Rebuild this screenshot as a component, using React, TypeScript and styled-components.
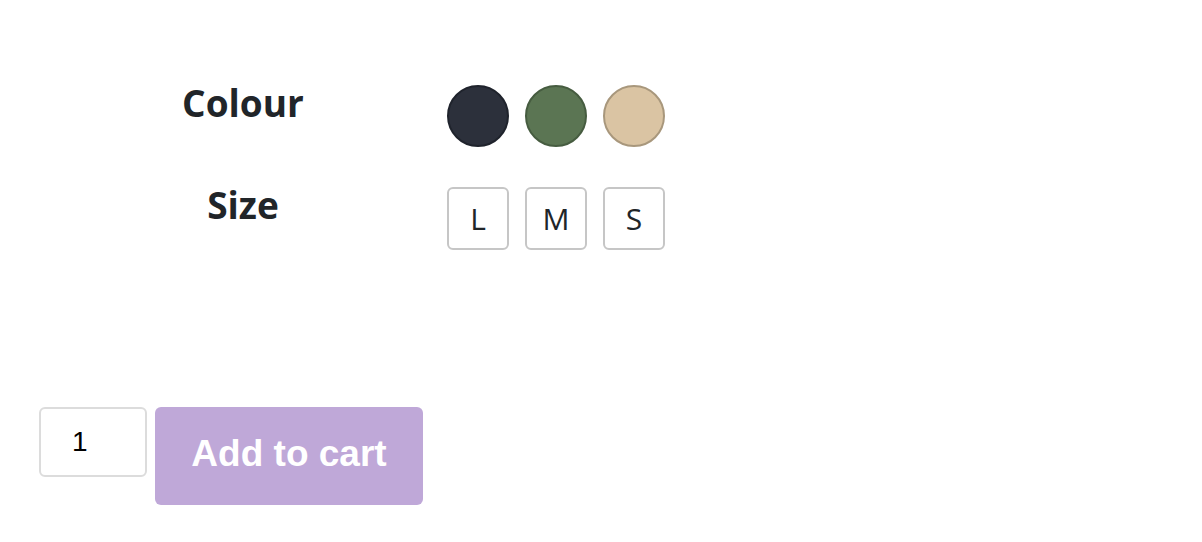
import React, { useState } from 'react';
import styled, { createGlobalStyle } from 'styled-components';

const GlobalStyle = createGlobalStyle`
    html, body {
        margin: 0;
        padding: 0;
        background: #ffffff;
    }
`;

const COLOURS = [
    { name: 'Navy', fill: '#2c303b', ring: '#1f232c' },
    { name: 'Olive', fill: '#5b7553', ring: '#465c40' },
    { name: 'Sand', fill: '#dac4a3', ring: '#a8977c' },
];

const SIZES = ['L', 'M', 'S'];

const App = () => {
    const [qty, setQty] = useState('1');

    return (
        <>
            <GlobalStyle />
            <Page>
                <Options>
                    <OptionLabel>Colour</OptionLabel>
                    <Choices>
                        {COLOURS.map((c) => (
                            <Swatch key={c.name} title={c.name} $fill={c.fill} $ring={c.ring} />
                        ))}
                    </Choices>
                    <OptionLabel>Size</OptionLabel>
                    <Choices>
                        {SIZES.map((s) => (
                            <SizeBox key={s}>{s}</SizeBox>
                        ))}
                    </Choices>
                </Options>
                <CartRow>
                    <QtyInput value={qty} onChange={(e) => setQty(e.target.value)} />
                    <AddButton disabled>Add to cart</AddButton>
                </CartRow>
            </Page>
        </>
    );
};

const Page = styled.div`
    padding: 85px 0 0 39px;
    font-family: "Open Sans", "Liberation Sans", sans-serif;
    color: #212529;
`;

const Options = styled.div`
    display: grid;
    grid-template-columns: 408px auto;
    row-gap: 40px;
    align-items: start;
`;

const OptionLabel = styled.div`
    font-size: 37px;
    font-weight: 700;
    line-height: 36px;
    text-align: center;
`;

const Choices = styled.div`
    display: flex;
    gap: 16px;
`;

const Swatch = styled.button<{ $fill: string; $ring: string }>`
    width: 62px;
    height: 62px;
    padding: 0;
    border-radius: 50%;
    border: 2px solid ${(p) => p.$ring};
    background: ${(p) => p.$fill};
    cursor: pointer;
`;

const SizeBox = styled.button`
    width: 62px;
    height: 63px;
    padding: 0;
    border: 2px solid #c6c6c6;
    border-radius: 6px;
    background: #ffffff;
    color: #212529;
    font-family: "Open Sans", "Liberation Sans", sans-serif;
    font-size: 30px;
    font-weight: 400;
    cursor: pointer;
`;

const CartRow = styled.div`
    display: flex;
    align-items: flex-start;
    gap: 8px;
    margin-top: 157px;
`;

const QtyInput = styled.input`
    box-sizing: border-box;
    width: 108px;
    height: 70px;
    border: 2px solid #dcdcdc;
    border-radius: 6px;
    padding: 0 0 0 31px;
    font-family: "Liberation Sans", Arial, sans-serif;
    font-size: 28px;
    color: #000000;
    outline: none;
`;

const AddButton = styled.button`
    width: 268px;
    height: 98px;
    border: none;
    border-radius: 6px;
    background: #bfa8d8;
    color: #ffffff;
    font-family: "Liberation Sans", Arial, sans-serif;
    font-size: 37px;
    font-weight: 700;
    padding: 0 0 4px;
    cursor: default;
`;

export default App;
